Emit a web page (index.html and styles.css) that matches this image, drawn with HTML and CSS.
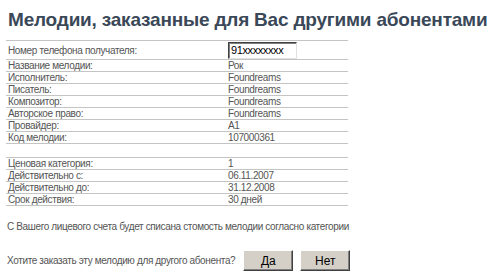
FILE: index.html
```html
<!DOCTYPE html>
<html lang="ru">

<head>
    <meta charset="UTF-8">
    <title>Мелодии</title>
    <link rel="stylesheet" href="styles.css">
</head>

<body>
    <div class="page">
        <h1 class="title">Мелодии, заказанные для Вас другими абонентами</h1>
        <table class="info">
            <tr class="first">
                <td class="label">Номер телефона получателя:</td>
                <td><input class="phone" type="text" value="91xxxxxxxx"></td>
            </tr>
            <tr><td class="label">Название мелодии:</td><td>Рок</td></tr>
            <tr><td class="label">Исполнитель:</td><td>Foundreams</td></tr>
            <tr><td class="label">Писатель:</td><td>Foundreams</td></tr>
            <tr><td class="label">Композитор:</td><td>Foundreams</td></tr>
            <tr><td class="label">Авторское право:</td><td>Foundreams</td></tr>
            <tr><td class="label">Провайдер:</td><td>A1</td></tr>
            <tr><td class="label">Код мелодии:</td><td>107000361</td></tr>
            <tr class="blank"><td></td><td></td></tr>
            <tr><td class="label">Ценовая категория:</td><td>1</td></tr>
            <tr><td class="label">Действительно с:</td><td>06.11.2007</td></tr>
            <tr><td class="label">Действительно до:</td><td>31.12.2008</td></tr>
            <tr><td class="label">Срок действия:</td><td>30 дней</td></tr>
        </table>
        <p class="note">С Вашего лицевого счета будет списана стомость мелодии согласно категории</p>
        <div class="ask">
            <span>Хотите заказать эту мелодию для другого абонента?</span>
            <input class="btn" type="button" value="Да">
            <input class="btn" type="button" value="Нет">
        </div>
    </div>
</body>

</html>
```

FILE: styles.css
```css
* {
    padding: 0;
    margin: 0;
    box-sizing: border-box;
}

body {
    background-color: #fff;
    font-family: "Liberation Sans", Arial, sans-serif;
    font-size: 10px;
    letter-spacing: -0.36px;
    color: #555;
}

.page {
    padding: 8px 0 0 6px;
}

.title {
    font-size: 19px;
    line-height: 24px;
    font-weight: bold;
    letter-spacing: -0.2px;
    color: #3a4858;
    padding-left: 2px;
    white-space: nowrap;
    margin-bottom: 8px;
}

.info {
    width: 342px;
    border-collapse: collapse;
    border-top: 1px solid #c4c4c4;
}

.info td {
    height: 12px;
    line-height: 11px;
    padding: 0 2px;
    border-bottom: 1px solid #c4c4c4;
    vertical-align: middle;
}

.info td.label {
    width: 220px;
}

.info .first td {
    height: 19px;
}

.info .blank td {
    height: 14px;
}

.phone {
    display: block;
    width: 69px;
    height: 17px;
    border: 1px solid;
    border-color: #404040 #e0e0e0 #e0e0e0 #404040;
    box-shadow: inset 1px 1px 0 #808080;
    font-family: "Liberation Sans", Arial, sans-serif;
    font-size: 11px;
    letter-spacing: -0.4px;
    color: #000;
    padding-left: 2px;
    outline: none;
}

.note {
    margin-top: 15px;
    padding-left: 1px;
    line-height: 12px;
}

.ask {
    display: flex;
    align-items: center;
    margin-top: 17px;
    padding-left: 1px;
}

.ask span {
    margin-right: 8px;
}

.btn {
    width: 50px;
    height: 21px;
    margin-right: 7px;
    background-color: #d4d0c8;
    border: 1px solid;
    border-color: #fff #404040 #404040 #fff;
    box-shadow: inset -1px -1px 0 #808080;
    font-family: "Liberation Sans", Arial, sans-serif;
    font-size: 12px;
    letter-spacing: 0;
    color: #000;
}
```
